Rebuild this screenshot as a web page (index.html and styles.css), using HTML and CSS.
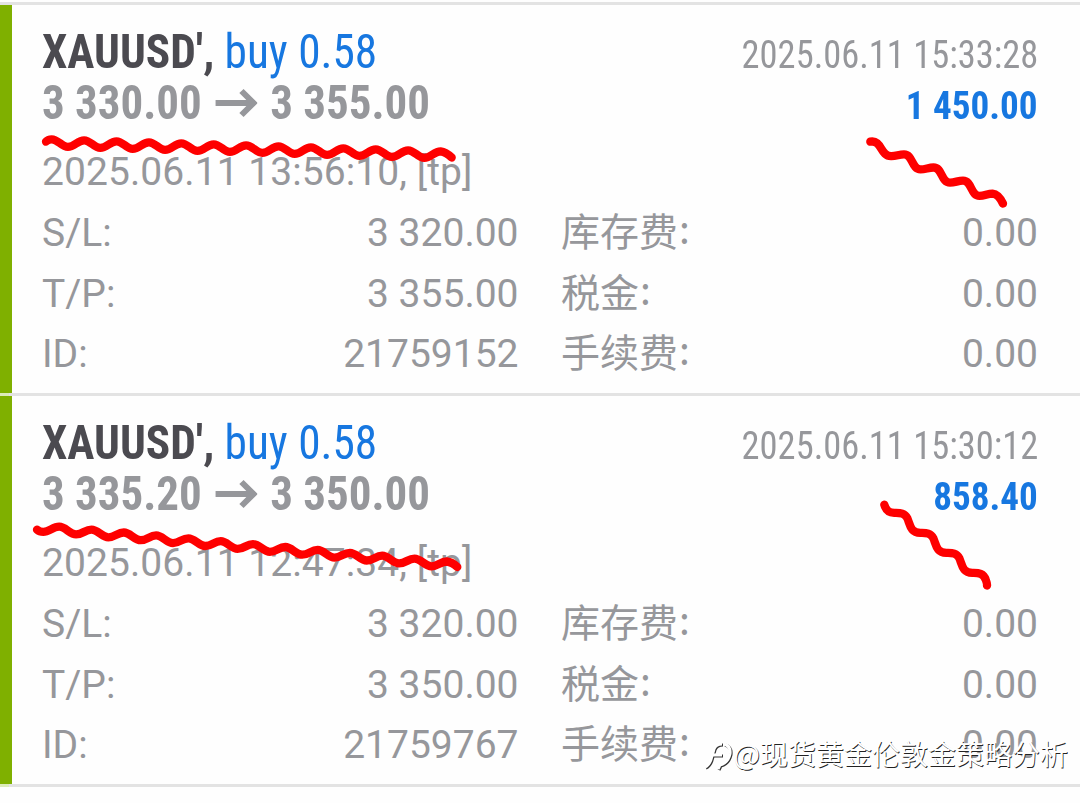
FILE: index.html
```html
<!DOCTYPE html>
<html lang="zh-CN">
<head>
  <meta charset="UTF-8" />
  <meta name="viewport" content="width=device-width, initial-scale=1.0"/>
  <title>XAUUSD</title>
  <link rel="stylesheet" href="styles.css">
</head>
<body>
  <div class="history">
    <div class="deal">
      <div class="head">
        <div class="title"><b>XAUUSD',</b> <span class="buy">buy 0.58</span></div>
        <div class="time">2025.06.11 15:33:28</div>
      </div>
      <div class="head">
        <div class="prices">
          <span>3 330.00</span>
          <svg class="arrow" viewBox="0 0 42 30" preserveAspectRatio="none"><path d="M0 15H38M26 3L38 15L26 27"/></svg>
          <span>3 355.00</span>
        </div>
        <div class="profit">1 450.00</div>
      </div>
      <div class="opened">2025.06.11 13:56:10, [tp]</div>
      <div class="details">
        <span>S/L:</span><span class="value">3 320.00</span>
        <span class="fee">库存费<i>:</i></span><span class="value">0.00</span>
        <span>T/P:</span><span class="value">3 355.00</span>
        <span class="fee">税金<i>:</i></span><span class="value">0.00</span>
        <span>ID:</span><span class="value">21759152</span>
        <span class="fee">手续费<i>:</i></span><span class="value">0.00</span>
      </div>
    </div>

    <div class="deal">
      <div class="head">
        <div class="title"><b>XAUUSD',</b> <span class="buy">buy 0.58</span></div>
        <div class="time">2025.06.11 15:30:12</div>
      </div>
      <div class="head">
        <div class="prices">
          <span>3 335.20</span>
          <svg class="arrow" viewBox="0 0 42 30" preserveAspectRatio="none"><path d="M0 15H38M26 3L38 15L26 27"/></svg>
          <span>3 350.00</span>
        </div>
        <div class="profit">858.40</div>
      </div>
      <div class="opened">2025.06.11 12:47:34, [tp]</div>
      <div class="details">
        <span>S/L:</span><span class="value">3 320.00</span>
        <span class="fee">库存费<i>:</i></span><span class="value">0.00</span>
        <span>T/P:</span><span class="value">3 350.00</span>
        <span class="fee">税金<i>:</i></span><span class="value">0.00</span>
        <span>ID:</span><span class="value">21759767</span>
        <span class="fee">手续费<i>:</i></span><span class="value">0.00</span>
      </div>
    </div>

    <svg class="marks" viewBox="0 0 1080 803">
      <path d="M46 141.7Q48 139.3 51.7 139.3c6.5 0 9.7 7.6 16.2 7.6s9.7-6.6 16.2-6.6s9.7 7.6 16.2 7.6s9.7-6.6 16.2-6.6s9.7 7.6 16.2 7.6s9.7-6.6 16.2-6.6s9.7 7.6 16.2 7.6s9.7-6.6 16.2-6.6s9.7 7.6 16.2 7.6s9.7-6.6 16.2-6.6s9.7 7.6 16.2 7.6s9.7-6.6 16.2-6.6s9.7 7.6 16.2 7.6s9.7-6.6 16.2-6.6s9.7 7.6 16.2 7.6s9.7-6.6 16.2-6.6s9.7 7.6 16.2 7.6s9.7-6.6 16.2-6.6s9.7 7.6 16.2 7.6s9.7-6.6 16.2-6.6s9.7 7.6 16.2 7.6s9.7-6.6 16.2-6.6s9.7 7.6 16.2 7.6s9.7-6.6 16.2-6.6Q446 152 451.7 157.5"/>
      <path d="M870.3 141.7C882 139.5 880 156 891 156.2c5 .2 8-1.9 13-1.9c9 0 7.5 15.1 16.5 15.1c5 0 8-1.9 13-1.9c9 0 7.5 15.1 16.5 15.1c5 0 8-1.9 13-1.9c9 0 7.5 15.1 16.5 15.1c5 0 8-2.2 13-2.2q6 .5 10.5 10"/>
      <path d="M37 529.7q2.5 2.2 6.3 2.2c6 0 9.5-5.2 15.9-5.2c6.5 0 10.4 7.7 16.9 7.7s9-4.8 15.4-4.8s10.4 7.7 16.9 7.7s9-4.8 15.4-4.8s10.4 7.7 16.9 7.7s9-4.8 15.4-4.8s10.4 7.7 16.9 7.7s9-4.8 15.4-4.8s10.4 7.7 16.9 7.7s9-4.8 15.4-4.8s10.4 7.7 16.9 7.7s9-4.8 15.4-4.8s10.4 7.7 16.9 7.7s9-4.8 15.4-4.8s10.4 7.7 16.9 7.7s9-4.8 15.4-4.8s10.4 7.7 16.9 7.7s9-4.8 15.4-4.8s10.4 7.7 16.9 7.7s9-4.8 15.4-4.8s10.4 7.7 16.9 7.7s9-4.8 15.4-4.8s10.4 7.7 16.9 7.7s9-4.8 15.4-4.8Q452 562 457.3 567"/>
      <path d="M884.3 504.7c2 7 6 8 10 8.2c5 .1 10-.6 13 5.2c3 7 3 14.5 13 14.8c5 .1 10-.6 13 5.2c3 7 3 14.5 13 14.8c5 .1 10-.6 13 5.2c3 7 3 14.5 13 14.8c5 .1 11-.6 13.5 7q1.5 4 1.2 5.6"/>
    </svg>

    <div class="watermark">
      <svg class="logo" viewBox="0 0 28 34"><path d="M1 31Q6 29 8 20L10 13Q12 8 18 8M7 19H18M20 8Q27 10 26 18Q24 27 16 29L14 33"/></svg>
      <span>@现货黄金伦敦金策略分析</span>
    </div>
  </div>
</body>
</html>
```
FILE: styles.css
```css
body {
  margin: 0;
  background-color: #fefefe;
  font-family: Roboto, "Noto Sans CJK SC", sans-serif;
  font-size: 39px;
  color: #96979b;
}

.history {
  position: relative;
  height: 803px;
  padding-top: 2px;
  box-sizing: border-box;
  overflow: hidden;
}

.deal {
  height: 391px;
  box-sizing: border-box;
  border-top: 3px solid #e3e3e3;
  padding: 21px 42px 0 42px;
  background: linear-gradient(#7fb000, #7fb000) left / 12px 100% no-repeat;
}
.deal + .deal {
  height: 394px;
  border-bottom: 3px solid #e3e3e3;
  border-image: linear-gradient(90deg, #dcebb9 12px, #e3e3e3 12px) 3;
}

.head {
  display: flex;
  justify-content: space-between;
  align-items: baseline;
  height: 51px;
  line-height: 51px;
  white-space: nowrap;
  font-family: "Roboto Condensed", Roboto, sans-serif;
  font-stretch: condensed;
}

.title {
  font-size: 48px;
  color: #4b4a50;
  transform: scaleX(0.944);
  transform-origin: left;
}
.buy {
  color: #1777e0;
}

.time {
  transform: scaleX(0.935);
  transform-origin: right;
}

.prices {
  display: flex;
  font-size: 48px;
  font-weight: bold;
  transform: scaleX(0.937);
  transform-origin: left;
}
.arrow {
  width: 45px;
  height: 30px;
  margin: 11px 14px 0 14px;
  fill: none;
  stroke: #96979b;
  stroke-width: 6;
}

.profit {
  font-weight: bold;
  color: #1777e0;
  transform: scaleX(0.952);
  transform-origin: right;
}

.opened {
  height: 60px;
  line-height: 60px;
  margin-top: 14px;
  padding-bottom: 1px;
  letter-spacing: 0.07px;
}

.details {
  display: grid;
  grid-template-columns: 150px 326.5px 150px 1fr;
  grid-auto-rows: 60.5px;
  line-height: 60px;
}
.value {
  text-align: right;
}
.fee {
  padding-left: 42.5px;
  white-space: nowrap;
}
.fee i {
  font-family: "Noto Sans CJK SC", sans-serif;
  font-style: normal;
  line-height: 1;
  margin-left: 1px;
  vertical-align: 2px;
}

.marks {
  position: absolute;
  left: 0;
  top: 0;
  width: 1080px;
  height: 803px;
  fill: none;
  stroke: #fe0000;
  stroke-width: 8.3;
  stroke-linecap: round;
}

.watermark {
  position: absolute;
  right: 12px;
  top: 734px;
  display: flex;
  align-items: center;
  font-family: "Noto Sans CJK SC", sans-serif;
  font-size: 28px;
  line-height: 38px;
  color: #fff;
  text-shadow: 0.8px 0.8px 0.5px #222;
}
.logo {
  width: 28px;
  height: 34px;
  margin-right: 2px;
  fill: none;
  stroke: #fff;
  stroke-width: 3;
  overflow: visible;
  filter: drop-shadow(1px 1px 0 #333);
}
```
